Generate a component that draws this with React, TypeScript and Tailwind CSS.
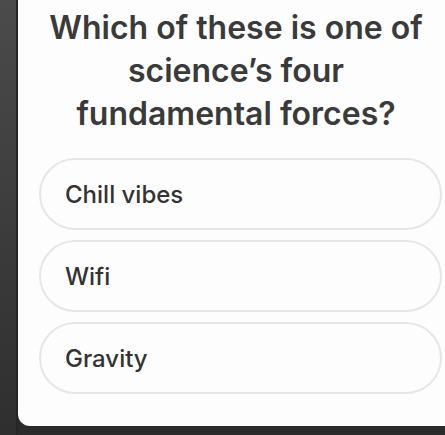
import React from "react";

export default function App() {
  const options = ["Chill vibes", "Wifi", "Gravity"];
  return (
    <div className="w-[445px] h-[435px] bg-[#2b2b2b] overflow-hidden flex" style={{ fontFamily: "Inter, 'Open Sans', sans-serif" }}>
      <div className="w-[18px] h-full shrink-0 bg-gradient-to-b from-[#4b4b4b] to-[#2f2f2f] border-r-2 border-[#262626]" />
      <div className="w-[440px] shrink-0 h-[426px] bg-[#fdfdfd] rounded-bl-[12px] flex flex-col pl-[21px]">
        <h1 className="w-[394px] text-[32px] leading-[43px] font-semibold text-[#3a3a3a] text-center pt-[6px] whitespace-nowrap">
          Which of these is one of<br />science’s four<br />fundamental forces?
        </h1>
        <div className="flex flex-col gap-[10px] mt-[23px] w-[403px]">
          {options.map((o) => (
            <div key={o} className="h-[72px] rounded-full border-2 border-[#e6e6e6] flex items-center pl-[24px] pt-[2px] text-[24px] font-medium text-[#333333]">
              {o}
            </div>
          ))}
        </div>
      </div>
    </div>
  );
}
